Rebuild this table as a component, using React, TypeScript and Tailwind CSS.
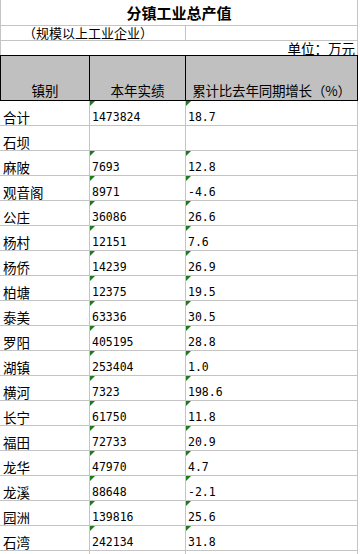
import React from "react";

const rows: [string, string, string][] = [
  ["合计", "1473824", "18.7"],
  ["石坝", "", ""],
  ["麻陂", "7693", "12.8"],
  ["观音阁", "8971", "-4.6"],
  ["公庄", "36086", "26.6"],
  ["杨村", "12151", "7.6"],
  ["杨侨", "14239", "26.9"],
  ["柏塘", "12375", "19.5"],
  ["泰美", "63336", "30.5"],
  ["罗阳", "405195", "28.8"],
  ["湖镇", "253404", "1.0"],
  ["横河", "7323", "198.6"],
  ["长宁", "61750", "11.8"],
  ["福田", "72733", "20.9"],
  ["龙华", "47970", "4.7"],
  ["龙溪", "88648", "-2.1"],
  ["园洲", "139816", "25.6"],
  ["石湾", "242134", "31.8"],
  ["", "", ""],
];

const cjk = "font-['SimSun','Noto_Sans_CJK_SC',sans-serif]";
const mono = "font-['DejaVu_Sans_Mono','Noto_Sans_CJK_SC',monospace]";

const Flag = () => (
  <span className="absolute left-0 top-0 w-0 h-0 border-t-[5px] border-r-[5px] border-t-[#1f7a1f] border-r-transparent" />
);

const NumCell = ({ value, width }: { value: string; width: string }) => (
  <div className={`relative ${width} h-full flex items-end pl-[2px] pb-[2px] border-r border-[#c4c4c4]`}>
    {value && <Flag />}
    <span className={`${mono} text-[11.5px] leading-none text-black`}>{value}</span>
  </div>
);

const App = () => {
  return (
    <div className={`w-[360px] h-[554px] overflow-hidden bg-white ${cjk} text-black`}>
      <div className="w-[358px]">
        {/* title rows */}
        <div className="h-[26px] flex items-center justify-center border-l border-r border-b border-[#c4c4c4]">
          <span className="text-[15px] font-bold leading-none">分镇工业总产值</span>
        </div>
        <div className="h-[15px] flex border-l border-r border-b border-[#c4c4c4]">
          <div className="w-[185px] h-full flex items-end pl-[22px] border-r border-[#c4c4c4]">
            <span className="text-[13px] leading-none pb-[1px]">（规模以上工业企业）</span>
          </div>
        </div>
        <div className="h-[14px] flex items-end justify-end pr-[2px] border-l border-r border-[#c4c4c4]">
          <span className="text-[13.5px] leading-none">单位：万元</span>
        </div>

        {/* header */}
        <div className="h-[46px] flex bg-[#c0c0c0] border-t border-b border-black">
          <div className="w-[90px] h-full flex items-end justify-center pb-[3px] border-l border-r border-black">
            <span className="text-[13.5px] leading-none">镇别</span>
          </div>
          <div className="w-[96px] h-full flex items-end justify-center pb-[3px] border-r border-black">
            <span className="text-[13.5px] leading-none">本年实绩</span>
          </div>
          <div className="w-[172px] h-full flex items-end justify-center pb-[3px] border-r border-black">
            <span className="text-[13.5px] leading-none tracking-[-0.2px]">累计比去年同期增长（%）</span>
          </div>
        </div>

        {/* data */}
        {rows.map((r, idx) => (
          <div key={idx} className="h-[25px] flex border-b border-[#c4c4c4]">
            <div className="w-[90px] h-full flex items-end pl-[3px] pb-[1px] border-r border-[#c4c4c4]">
              <span className="text-[13.5px] leading-none">{r[0]}</span>
            </div>
            <NumCell value={r[1]} width="w-[96px]" />
            <NumCell value={r[2]} width="w-[172px]" />
          </div>
        ))}
      </div>
    </div>
  );
};

export default App;
